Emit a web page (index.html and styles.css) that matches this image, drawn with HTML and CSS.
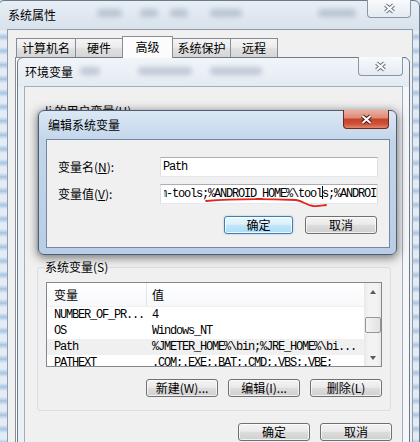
FILE: index.html
```html
<!DOCTYPE html>
<html lang="zh-CN">
<head>
<meta charset="utf-8">
<title>环境变量</title>
<link rel="stylesheet" href="styles.css">
</head>
<body>
<main class="desktop">

  <!-- 系统属性 -->
  <section class="win win-sys">
    <header class="caption">
      <span class="haze h1"></span><span class="haze h2"></span><span class="haze h3"></span><span class="haze h4"></span><span class="haze h5"></span>
      <span class="cap-title">系统属性</span>
      <span class="close close-sys">
        <svg width="13" height="11" viewBox="0 0 13 11"><path d="M2.5 2 L10.5 9 M10.5 2 L2.5 9" stroke="#6a7480" stroke-width="4"/><path d="M2.5 2 L10.5 9 M10.5 2 L2.5 9" stroke="#fbfcfd" stroke-width="2"/></svg>
      </span>
    </header>
    <div class="client sys-client">
      <nav class="tabs">
        <span class="tab tab-a">计算机名</span>
        <span class="tab tab-b">硬件</span>
        <span class="tab tab-on">高级</span>
        <span class="tab tab-c">系统保护</span>
        <span class="tab tab-d">远程</span>
      </nav>
      <div class="tabpage"></div>
    </div>
  </section>

  <!-- 环境变量 -->
  <section class="win win-env">
    <header class="caption">
      <span class="haze e1"></span><span class="haze e2"></span><span class="haze e3"></span>
      <span class="cap-title">环境变量</span>
      <span class="close close-env">
        <svg width="13" height="11" viewBox="0 0 13 11"><path d="M2.5 2 L10.5 9 M10.5 2 L2.5 9" stroke="#6a7480" stroke-width="4"/><path d="M2.5 2 L10.5 9 M10.5 2 L2.5 9" stroke="#fbfcfd" stroke-width="2"/></svg>
      </span>
    </header>
    <div class="client env-client">
      <fieldset class="group group-user">
        <legend>lj 的用户变量(U)</legend>
        <div class="list"></div>
        <div class="btn-space"></div>
      </fieldset>

      <fieldset class="group group-sys">
        <legend>系统变量(S)</legend>
        <div class="list">
          <div class="list-main">
            <div class="list-head"><span class="col1">变量</span><span class="col2">值</span></div>
            <div class="row"><span class="col1 mono">NUMBER_OF_PR...</span><span class="col2 mono">4</span></div>
            <div class="row"><span class="col1 mono">OS</span><span class="col2 mono">Windows_NT</span></div>
            <div class="row row-sel"><span class="col1 mono">Path</span><span class="col2 mono">%JMETER_HOME%\bin;%JRE_HOME%\bi...</span></div>
            <div class="row"><span class="col1 mono">PATHEXT</span><span class="col2 mono">.COM;.EXE;.BAT;.CMD;.VBS;.VBE;</span></div>
          </div>
          <div class="vscroll">
            <span class="sb-arrow"><span class="tri tri-up"></span></span>
            <span class="sb-track"><span class="sb-thumb"></span></span>
            <span class="sb-arrow"><span class="tri tri-down"></span></span>
          </div>
        </div>
        <div class="btn-row">
          <button class="btn">新建(W)...</button>
          <button class="btn">编辑(I)...</button>
          <button class="btn">删除(L)</button>
        </div>
      </fieldset>

      <div class="btn-row dlg-btns">
        <button class="btn">确定</button>
        <button class="btn">取消</button>
      </div>
    </div>
  </section>

  <!-- 编辑系统变量 -->
  <section class="win win-edit">
    <header class="caption">
      <span class="cap-title">编辑系统变量</span>
      <span class="close close-red">
        <svg width="13" height="11" viewBox="0 0 13 11"><path d="M2.5 2 L10.5 9 M10.5 2 L2.5 9" stroke="#4a1a12" stroke-width="4"/><path d="M2.5 2 L10.5 9 M10.5 2 L2.5 9" stroke="#ffffff" stroke-width="2"/></svg>
      </span>
    </header>
    <div class="client edit-client">
      <div class="form">
        <label class="lbl">变量名(<u>N</u>):</label>
        <div class="field mono">Path</div>
        <label class="lbl">变量值(<u>V</u>):</label>
        <div class="field field-scroll mono"><span class="view"><span class="scrolled">platform-tools;%ANDROID_HOME%\tool<span class="caret"></span>s;%ANDROID_HOME%\platform-tools</span></span></div>
      </div>
      <div class="btn-row edit-btns">
        <button class="btn btn-default">确定</button>
        <button class="btn">取消</button>
      </div>
      <!-- hand-drawn marker stroke under the tools entry -->
      <svg class="ink" width="344" height="109" viewBox="0 0 344 109">
        <path d="M160 62 C184 60 224 60 250 61 C257 62 260 66 267 67 C272 67.5 276 66.5 280 66" fill="none" stroke="#e3241f" stroke-width="1.8" stroke-linecap="round"/>
      </svg>
    </div>
  </section>

</main>
</body>
</html>
```

FILE: styles.css
```css
* {
  box-sizing: border-box;
}

html,
body {
  margin: 0;
  padding: 0;
}

body {
  width: 420px;
  height: 442px;
  overflow: hidden;
  background: #d9e4ef;
  font-family: "Noto Sans CJK SC", sans-serif;
  font-size: 12px;
  line-height: 14px;
  color: #000;
}

.desktop {
  position: relative;
  width: 420px;
  height: 442px;
  overflow: hidden;
}

/* ---------- window chrome ---------- */

.win {
  position: absolute;
  display: flex;
  flex-direction: column;
  border: 1px solid #6d7a89;
  border-radius: 6px 6px 0 0;
}

.win-sys {
  left: -2px;
  top: 0;
  width: 422px;
  height: 480px;
  padding: 0 6px 6px 8px;
  background:
    linear-gradient(#e7eef5, #d8e2ec) top / 100% 29px no-repeat,
    repeating-linear-gradient(180deg, #e3ebf4 0, #e3ebf4 4px, #a8c3e3 8px, #e3ebf4 12px, #e3ebf4 14px);
}

.win-env {
  left: 17px;
  top: 57px;
  width: 393px;
  height: 430px;
  padding: 0 6px 6px 6px;
  background:
    linear-gradient(#f1f5f9, #e3eaf2) top / 100% 29px no-repeat,
    linear-gradient(90deg, #e9f1f7, #f4f8fb);
}

.win-edit {
  left: 38px;
  top: 110px;
  width: 359px;
  height: 145px;
  padding: 0 6px 6px 7px;
  border-color: #4f5f73;
  border-radius: 6px;
  background:
    linear-gradient(#dbe7f4, #c3d6eb) top / 100% 29px no-repeat,
    linear-gradient(#c4d7ec, #b9cee6);
  box-shadow: 0 2px 10px 1px rgba(0, 0, 0, 0.5);
}

.caption {
  position: relative;
  display: flex;
  align-items: center;
  height: 28px;
  flex: none;
}

.cap-title {
  position: relative;
  padding-left: 1px;
  line-height: 14px;
}

.win-edit .cap-title {
  padding-left: 2px;
}

/* blurred desktop showing through the glass */
.haze {
  position: absolute;
  top: 8px;
  height: 8px;
  border-radius: 4px;
  background: rgba(105, 122, 145, 0.32);
  filter: blur(2.5px);
}

.h1 { left: 90px; width: 25px; }
.h2 { left: 133px; width: 18px; }
.h3 { left: 163px; width: 18px; }
.h4 { left: 203px; width: 32px; }
.h5 { left: 311px; width: 38px; }

.e1 { left: 56px; width: 20px; top: 9px; }
.e2 { left: 114px; width: 54px; top: 9px; }
.e3 { left: 186px; width: 52px; top: 9px; }

.close {
  position: relative;
  margin-left: auto;
  align-self: flex-start;
  margin-top: -1px;
  display: flex;
  align-items: center;
  justify-content: center;
  border: 1px solid #8896a6;
  border-top: none;
  border-radius: 0 0 4px 4px;
  background: linear-gradient(#f8fafc, #e5ebf1);
}

.close-sys {
  width: 44px;
  height: 18px;
  margin-right: 2px;
}

.close-env {
  width: 45px;
  height: 19px;
}

.close-red {
  width: 46px;
  height: 19px;
  margin-right: 1px;
  border-color: #6e2920;
  background: linear-gradient(#eab0a3 0%, #dc8c7a 42%, #c7432d 52%, #cf5139 78%, #e0876b 100%);
}

.client {
  flex: 1;
  background: #f0f0f0;
  border: 1px solid #8f9cab;
}

/* ---------- 系统属性 tabs ---------- */

.sys-client {
  display: flex;
  flex-direction: column;
  padding: 6px 6px 0 7px;
}

.tabs {
  display: flex;
  align-items: flex-end;
  height: 21px;
  margin-left: 1px;
}

.tab {
  display: flex;
  align-items: center;
  justify-content: center;
  height: 19px;
  border: 1px solid #898c95;
  border-bottom: none;
  background: linear-gradient(#f4f4f4, #ececec 45%, #e0e0e0 55%, #d5d5d5);
}

.tab + .tab {
  margin-left: -1px;
}

.tab-a { width: 60px; }
.tab-b { width: 48px; }
.tab-c { width: 59px; }
.tab-d { width: 48px; }

.tab-on {
  position: relative;
  z-index: 1;
  width: 51px;
  height: 22px;
  margin-bottom: -1px;
  padding-bottom: 2px;
  background: #fcfcfc;
}

.tabpage {
  flex: 1;
  border: 1px solid #898c95;
  background: #fcfcfc;
}

/* ---------- 环境变量 ---------- */

.env-client {
  padding: 17px 10px 0 12px;
  border-color: #a2aebc;
}

.group {
  margin: 0 1px 0 0;
  padding: 8px 8px 13px 8px;
  min-width: 0;
  border: 1px solid #d5dfe5;
  border-radius: 3px;
}

.group legend {
  margin-left: -1px;
  padding: 0;
  line-height: 14px;
}

.group-sys {
  margin-top: 5px;
}

.btn-space {
  height: 18px;
  margin-top: 12px;
}

.list {
  display: flex;
  height: 85px;
  border: 1px solid #828790;
  background: #fff;
}

.list-main {
  flex: 1;
  overflow: hidden;
}

.list-head {
  display: flex;
  height: 24px;
  align-items: center;
  background: linear-gradient(#ffffff, #f7f8fa);
  border-bottom: 1px solid #eef0f3;
}

.list-head .col1 {
  align-self: stretch;
  display: flex;
  align-items: center;
  border-right: 1px solid #e3e5e8;
}

.col1 {
  width: 100px;
  flex: none;
  padding-left: 7px;
  white-space: nowrap;
  overflow: hidden;
}

.col2 {
  padding-left: 5px;
  white-space: nowrap;
}

.row {
  display: flex;
  height: 16px;
  align-items: center;
}

.row-sel {
  background: #f0f0f0;
}

.mono {
  font-family: "Liberation Mono", monospace;
  font-size: 12px;
  letter-spacing: -1.2px;
}

.vscroll {
  display: flex;
  flex-direction: column;
  width: 17px;
  flex: none;
  background: linear-gradient(90deg, #e8e8e8, #f3f3f3 25%, #f3f3f3 75%, #e8e8e8);
}

.sb-arrow {
  display: flex;
  align-items: center;
  justify-content: center;
  height: 17px;
  flex: none;
}

.tri {
  width: 0;
  height: 0;
  border-left: 3.5px solid transparent;
  border-right: 3.5px solid transparent;
}

.tri-up {
  border-bottom: 4px solid #5a5a5a;
}

.tri-down {
  border-top: 4px solid #5a5a5a;
}

.sb-track {
  flex: 1;
  display: flex;
  flex-direction: column;
  padding-top: 17px;
}

.sb-thumb {
  height: 16px;
  margin: 0 0 0 1px;
  border: 1px solid #979797;
  border-radius: 2px;
  background: linear-gradient(90deg, #f4f4f4, #e2e2e2);
}

.btn-row {
  display: flex;
  justify-content: flex-end;
  gap: 10px;
  margin-top: 12px;
}

.btn {
  width: 72px;
  height: 18px;
  padding: 0;
  border: 1px solid #707070;
  border-radius: 3px;
  background: linear-gradient(#f3f3f3, #ebebeb 45%, #dddddd 52%, #cfcfcf);
  box-shadow: inset 0 0 0 1px rgba(255, 255, 255, 0.7);
  font-family: "Noto Sans CJK SC", sans-serif;
  font-size: 12px;
  line-height: 14px;
  color: #000;
}

/* ---------- 编辑系统变量 ---------- */

.edit-client {
  position: relative;
  padding: 17px 11px 0 11px;
  border-color: #7587a0;
}

.form {
  display: grid;
  grid-template-columns: 102px 1fr;
  grid-auto-rows: 20px;
  row-gap: 7px;
}

.lbl {
  align-self: center;
  white-space: nowrap;
}

.field {
  height: 20px;
  padding-left: 2px;
  line-height: 18px;
  white-space: nowrap;
  overflow: hidden;
  background: #fff;
  border: 1px solid #dbdfe6;
  border-top-color: #abadb3;
  border-bottom-color: #e3e9ef;
}

.field-scroll {
  padding-left: 0;
}

/* visible window of the edit text, clipped a few pixels in from the border */
.view {
  display: block;
  margin-left: 3px;
  overflow: hidden;
}

/* value scrolled so the caret near "tools" stays in view */
.scrolled {
  display: inline-block;
  margin-left: -46px;
}

.caret {
  display: inline-block;
  width: 0;
  height: 13px;
  margin-right: -1px;
  vertical-align: -2px;
  border-left: 1px solid #000;
}

.edit-btns {
  gap: 12px;
  padding-right: 1px;
}

.btn-default {
  width: 69px;
  border-color: #3c7fb1;
  background: linear-gradient(#ecf7fd, #dcf1fc 45%, #c2e6f9 52%, #acdcf5);
  box-shadow: inset 0 0 0 1px rgba(255, 255, 255, 0.8), 0 0 2px rgba(60, 140, 200, 0.5);
}

.ink {
  position: absolute;
  left: -1px;
  top: -1px;
  pointer-events: none;
}
```
